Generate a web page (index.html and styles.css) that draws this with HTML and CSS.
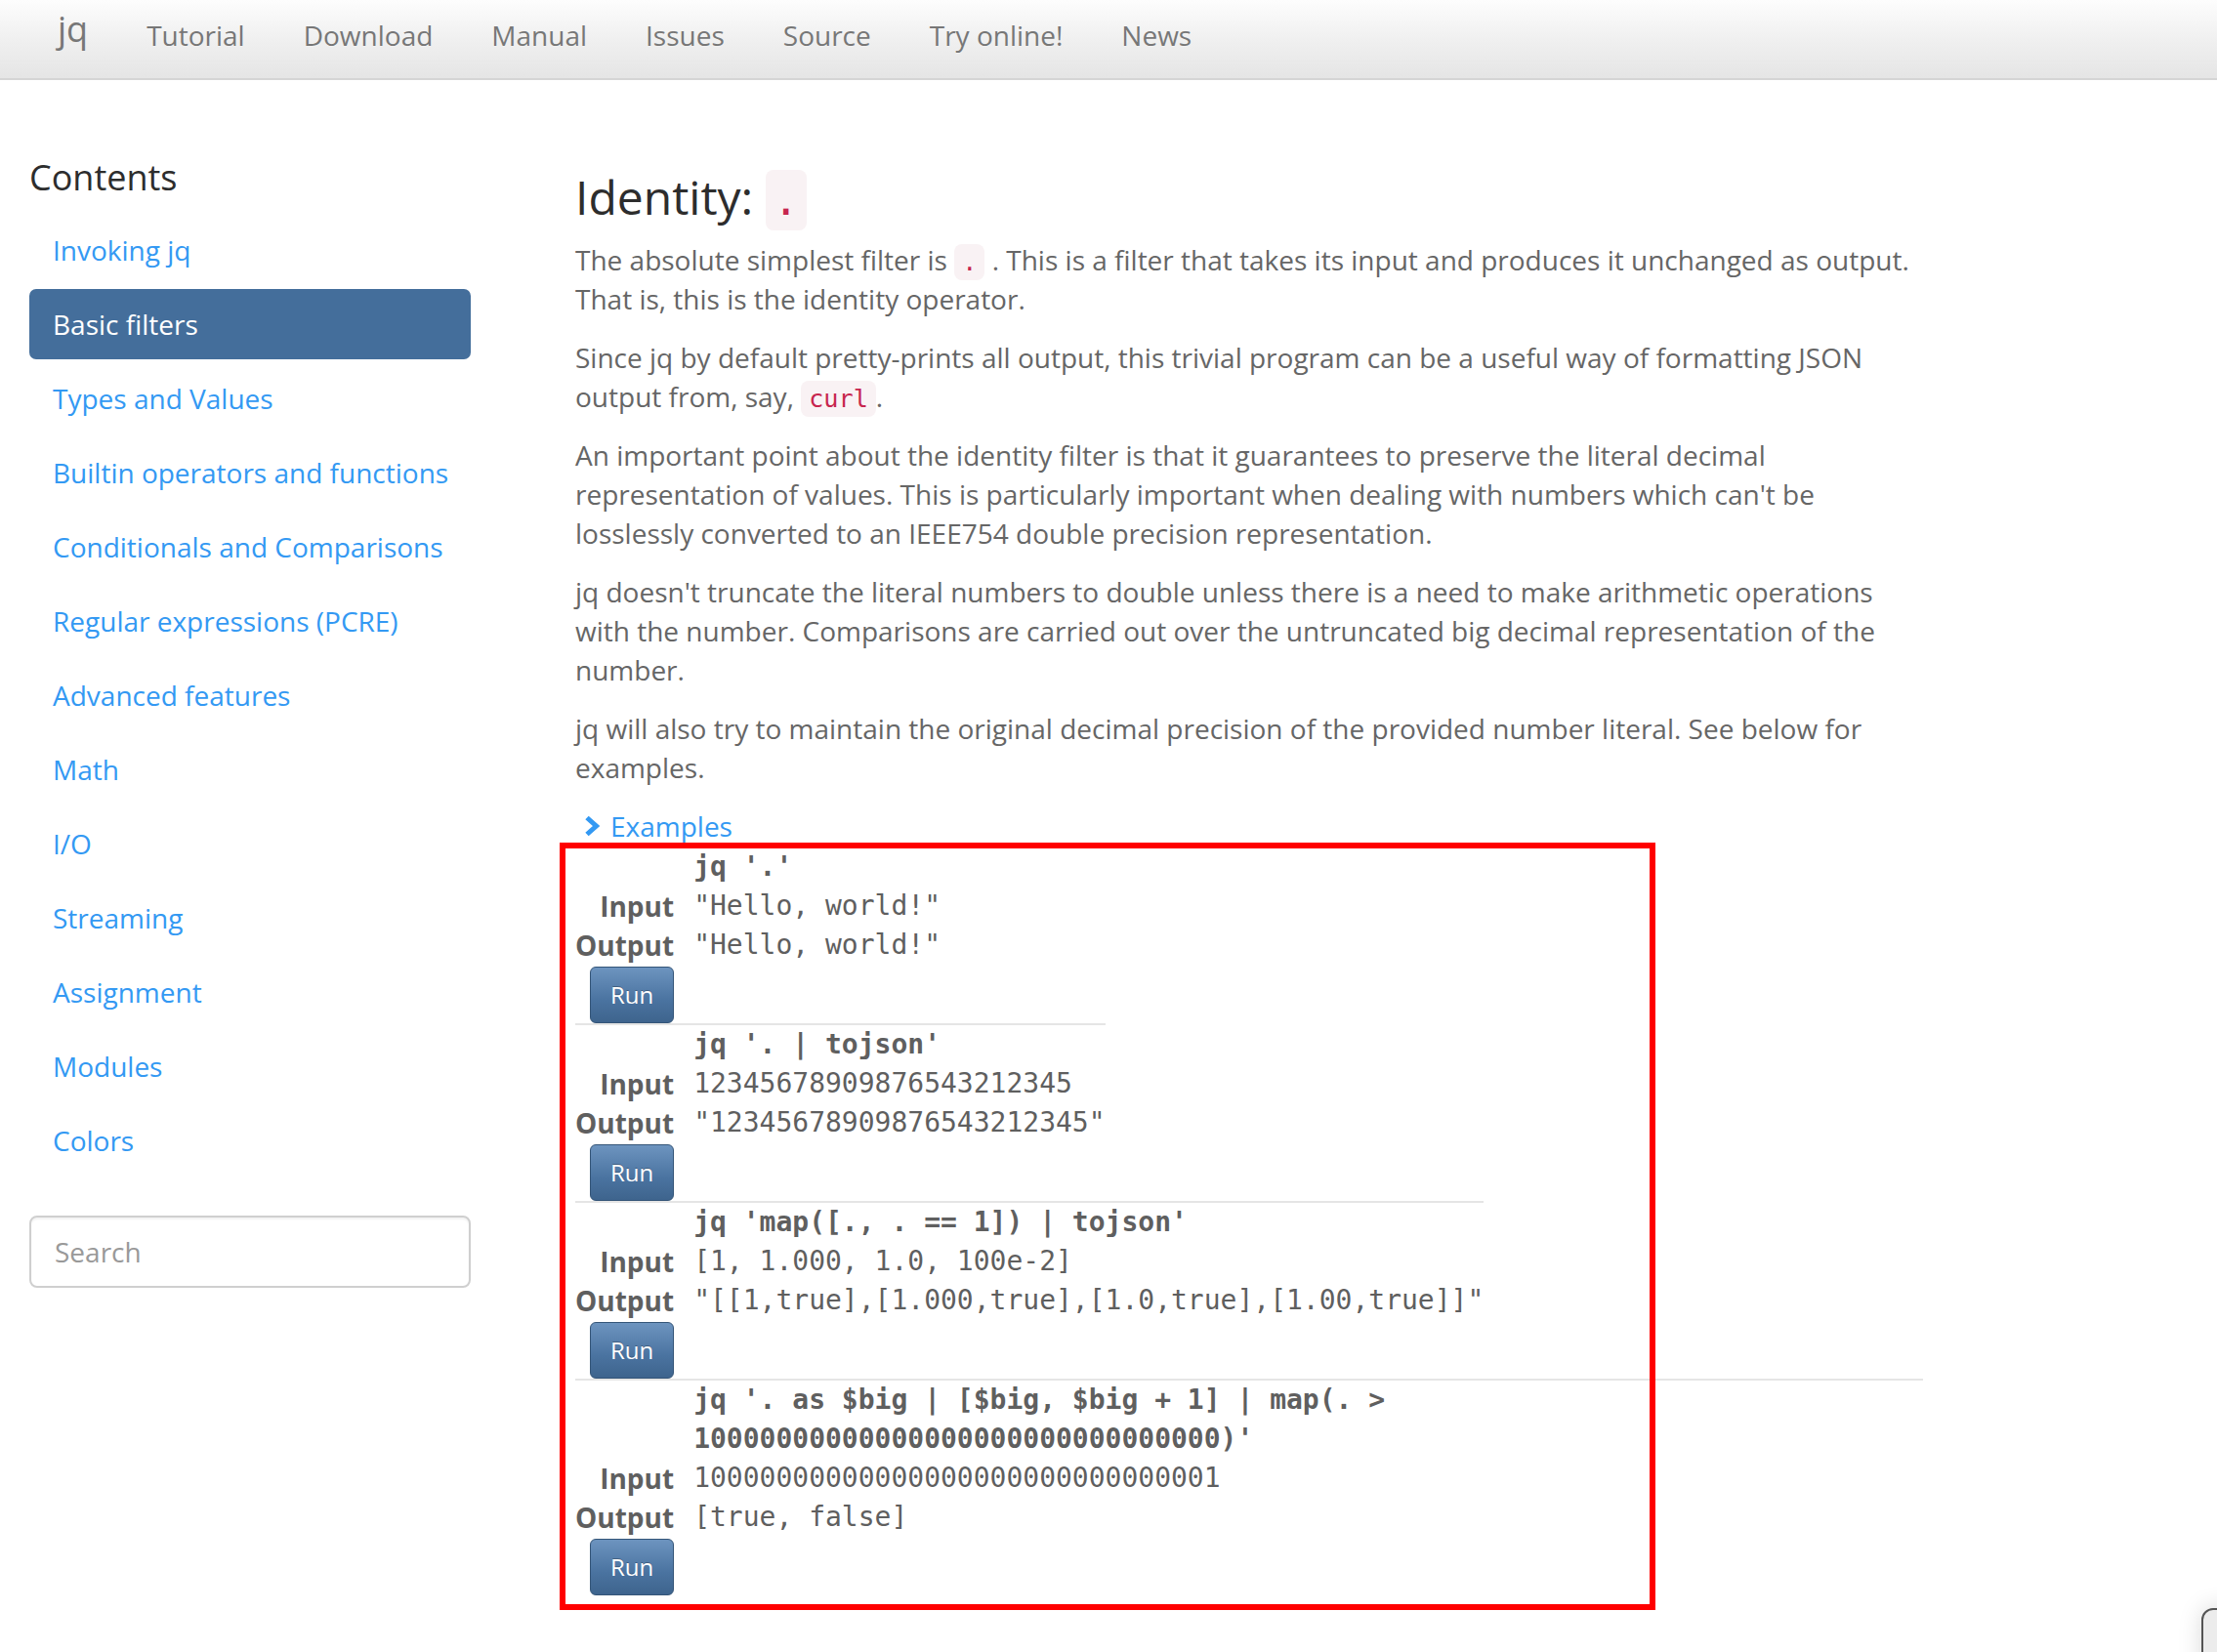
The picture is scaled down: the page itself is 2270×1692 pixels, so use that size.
FILE: index.html
```html
<!DOCTYPE html>
<html lang="en">
<head>
<meta charset="utf-8">
<title>jq Manual</title>
<link rel="stylesheet" href="styles.css">
</head>
<body>
<nav class="navbar">
  <a class="brand" href="#">jq</a>
  <ul class="nav-links">
    <li><a href="#">Tutorial</a></li>
    <li><a href="#">Download</a></li>
    <li><a href="#">Manual</a></li>
    <li><a href="#">Issues</a></li>
    <li><a href="#">Source</a></li>
    <li><a href="#">Try online!</a></li>
    <li><a href="#">News</a></li>
  </ul>
</nav>
<div class="page">
  <aside class="sidebar">
    <h4 class="toc-title">Contents</h4>
    <ul class="toc">
      <li><a href="#">Invoking jq</a></li>
      <li class="active"><a href="#">Basic filters</a></li>
      <li><a href="#">Types and Values</a></li>
      <li><a href="#">Builtin operators and functions</a></li>
      <li><a href="#">Conditionals and Comparisons</a></li>
      <li><a href="#">Regular expressions (PCRE)</a></li>
      <li><a href="#">Advanced features</a></li>
      <li><a href="#">Math</a></li>
      <li><a href="#">I/O</a></li>
      <li><a href="#">Streaming</a></li>
      <li><a href="#">Assignment</a></li>
      <li><a href="#">Modules</a></li>
      <li><a href="#">Colors</a></li>
    </ul>
    <input class="search" type="text" placeholder="Search">
  </aside>
  <main class="content">
    <h3 class="section-title">Identity: <code>.</code></h3>
    <p>The absolute simplest filter is <code>.</code> . This is a filter that takes its input and produces it unchanged as output. That is, this is the identity operator.</p>
    <p>Since jq by default pretty-prints all output, this trivial program can be a useful way of formatting JSON output from, say, <code>curl</code>.</p>
    <p>An important point about the identity filter is that it guarantees to preserve the literal decimal representation of values. This is particularly important when dealing with numbers which can't be losslessly converted to an IEEE754 double precision representation.</p>
    <p>jq doesn't truncate the literal numbers to double unless there is a need to make arithmetic operations with the number. Comparisons are carried out over the untruncated big decimal representation of the number.</p>
    <p>jq will also try to maintain the original decimal precision of the provided number literal. See below for examples.</p>
    <a class="examples-toggle" href="#"><svg class="chevron" width="16" height="22" viewBox="0 0 16 22"><polyline points="3,2.5 12.5,11 3,19.5" fill="none" stroke="#3399f3" stroke-width="5" stroke-linejoin="miter"/></svg>Examples</a>
    <div class="examples">
      <table class="example">
        <tr><th></th><td class="program">jq '.'</td></tr>
        <tr><th>Input</th><td>"Hello, world!"</td></tr>
        <tr><th>Output</th><td>"Hello, world!"</td></tr>
        <tr><th><button class="run">Run</button></th><td></td></tr>
      </table>
      <table class="example">
        <tr><th></th><td class="program">jq '. | tojson'</td></tr>
        <tr><th>Input</th><td>12345678909876543212345</td></tr>
        <tr><th>Output</th><td>"12345678909876543212345"</td></tr>
        <tr><th><button class="run">Run</button></th><td></td></tr>
      </table>
      <table class="example">
        <tr><th></th><td class="program">jq 'map([., . == 1]) | tojson'</td></tr>
        <tr><th>Input</th><td>[1, 1.000, 1.0, 100e-2]</td></tr>
        <tr><th>Output</th><td>"[[1,true],[1.000,true],[1.0,true],[1.00,true]]"</td></tr>
        <tr><th><button class="run">Run</button></th><td></td></tr>
      </table>
      <table class="example">
        <tr><th></th><td class="program">jq '. as $big | [$big, $big + 1] | map(. &gt; 10000000000000000000000000000000)'</td></tr>
        <tr><th>Input</th><td>10000000000000000000000000000001</td></tr>
        <tr><th>Output</th><td>[true, false]</td></tr>
        <tr><th><button class="run">Run</button></th><td></td></tr>
      </table>
    </div>
  </main>
  <div class="highlight-box"></div>
</div>
<div class="corner-widget"></div>
</body>
</html>
```
FILE: styles.css
```css
html {
  overflow: hidden;
  background: #fff;
}
body {
  margin: 0;
  padding: 0;
  min-height: 1692px;
  font-family: "Open Sans", "Liberation Sans", sans-serif;
  font-size: 28px;
  line-height: 40px;
  color: #666;
}
a { text-decoration: none; }

/* navbar */
.navbar {
  display: flex;
  align-items: flex-start;
  height: 80px;
  border-bottom: 2px solid #d5d5d5;
  background-image: linear-gradient(#fdfdfd, #f0f0f0 50%, #e5e5e5);
  box-sizing: content-box;
}
.brand {
  font-size: 36px;
  line-height: 40px;
  padding: 10px 30px 0 59px;
  color: #777;
}
.nav-links {
  display: flex;
  list-style: none;
  margin: 0;
  padding: 0;
}
.nav-links a {
  display: block;
  padding: 16px 30px 0;
  line-height: 40px;
  color: #777;
  text-shadow: 0 1px 0 rgba(255,255,255,.3);
}

/* layout */
.page {
  position: relative;
  display: flex;
  align-items: flex-start;
}
.sidebar {
  width: 452px;
  margin-left: 30px;
  padding-top: 80px;
  flex: none;
}
.toc-title {
  margin: 0 0 18px;
  font-size: 36px;
  line-height: 39.6px;
  font-weight: 400;
  color: #2d2d2d;
}
.toc {
  list-style: none;
  margin: 0;
  padding: 0;
}
.toc li + li { margin-top: 4px; }
.toc a {
  display: block;
  padding: 16px 24px;
  line-height: 40px;
  color: #3399f3;
  border-radius: 7px;
  white-space: nowrap;
}
.toc .active a {
  background: #446e9b;
  color: #fff;
}
.search {
  display: block;
  box-sizing: border-box;
  width: 100%;
  height: 74px;
  margin-top: 41px;
  padding: 0 24px;
  border: 2px solid #cfcfcf;
  border-radius: 8px;
  font-family: "Open Sans", "Liberation Sans", sans-serif;
  font-size: 28px;
  color: #666;
  background: #fff;
  box-shadow: inset 0 2px 2px rgba(0,0,0,.05);
}
.search::placeholder { color: #999; }

.content {
  width: 1380px;
  margin-left: 107px;
  padding-top: 94px;
  flex: none;
}
.section-title {
  margin: 0 0 17px;
  font-size: 48px;
  line-height: 52.8px;
  font-weight: 400;
  color: #2d2d2d;
}
code {
  font-family: "DejaVu Sans Mono", "Liberation Mono", monospace;
  font-size: 90%;
  line-height: 1;
  padding: 4px 8px;
  color: #c7254e;
  background: #f9f2f4;
  border-radius: 8px;
}
.section-title code {
  padding: 6px 8px;
}
.content p { margin: 0 0 20px; }

.examples-toggle {
  display: inline-flex;
  align-items: center;
  color: #3399f3;
  line-height: 40px;
}
.chevron {
  margin: 0 11px 0 9px;
}

.example {
  border-collapse: separate;
  border-spacing: 0;
  border-top: 2px solid #e5e5e5;
  font-family: "DejaVu Sans Mono", "Liberation Mono", monospace;
  font-size: 28px;
  line-height: 40px;
  color: #5f5f5f;
}
.example th {
  font-family: "Open Sans", "Liberation Sans", sans-serif;
  font-weight: 700;
  text-align: right;
  vertical-align: top;
  padding: 0 20px 0 0;
  white-space: nowrap;
  color: #5f5f5f;
}
.example td {
  padding: 0;
  vertical-align: top;
}
.example td.program { font-weight: 700; }

.run {
  display: block;
  margin: 2px 0 0 auto;
  padding: 10px 20px;
  font-family: "Open Sans", "Liberation Sans", sans-serif;
  font-size: 24px;
  line-height: 36px;
  color: #fff;
  border: 1px solid #345578;
  border-radius: 6px;
  background-image: linear-gradient(#6d94bf, #4a73a0 60%, #3e648d);
  text-shadow: 0 -1px 0 rgba(0,0,0,.25);
}

/* annotation overlay */
.highlight-box {
  position: absolute;
  left: 573px;
  top: 781px;
  width: 1122px;
  height: 786px;
  box-sizing: border-box;
  border: 6px solid #ff0000;
  pointer-events: none;
}

.corner-widget {
  position: fixed;
  left: 2254px;
  top: 1647px;
  width: 60px;
  height: 80px;
  border: 2px solid #555;
  border-radius: 12px;
  background: #ececec;
  box-shadow: 0 0 24px rgba(0,0,0,.15);
}
```
